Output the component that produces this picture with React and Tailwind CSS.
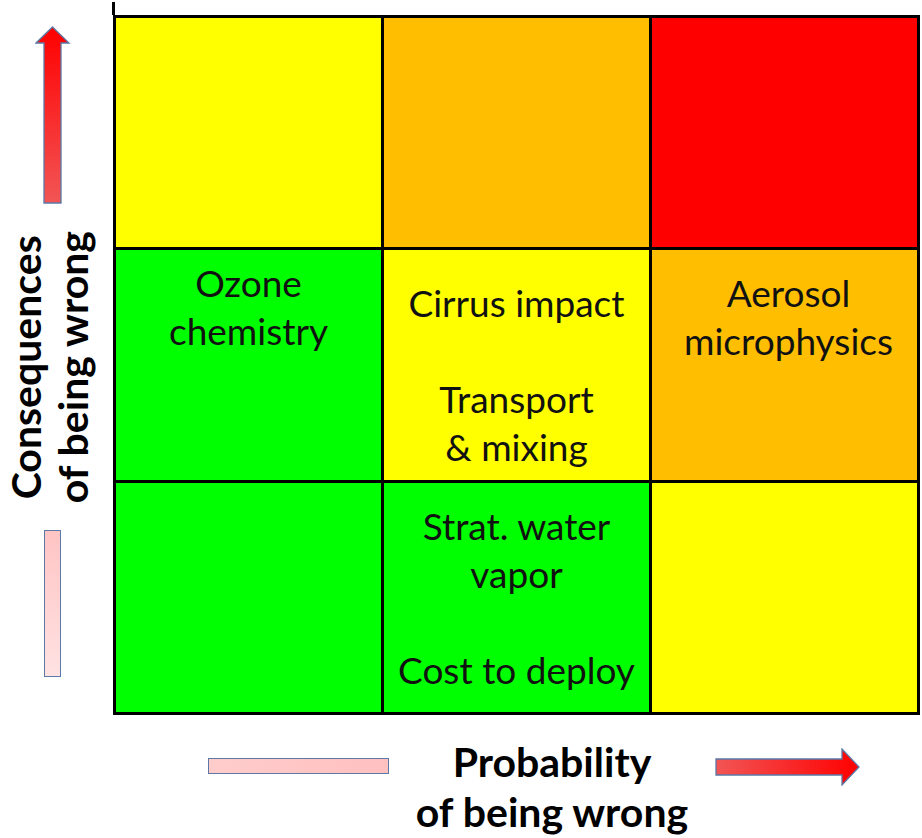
import React from 'react';

const FONT = { fontFamily: 'Lato, "Open Sans", sans-serif' };

// risk matrix: rows top→bottom, each cell has a fill and optional label lines
const ROWS = [
  [
    { bg: 'bg-[#ffff00]' },
    { bg: 'bg-[#ffbf00]' },
    { bg: 'bg-[#ff0000]' },
  ],
  [
    { bg: 'bg-[#00ff00]', pad: 'pt-[9px]', lines: ['Ozone', 'chemistry'] },
    { bg: 'bg-[#ffff00]', pad: 'pt-[29px]', lines: ['Cirrus impact', '', 'Transport', '& mixing'] },
    { bg: 'bg-[#ffbf00] pl-[8px]', pad: 'pt-[19px]', lines: ['Aerosol', 'microphysics'] },
  ],
  [
    { bg: 'bg-[#00ff00]' },
    { bg: 'bg-[#00ff00]', pad: 'pt-[19px]', lines: ['Strat. water', 'vapor', '', 'Cost to deploy'] },
    { bg: 'bg-[#ffff00]' },
  ],
];

function UpArrow() {
  return (
    <svg width="36" height="178" viewBox="0 0 36 178">
      <defs>
        <linearGradient id="upg" x1="0" y1="0" x2="0" y2="1">
          <stop offset="0" stopColor="#ff0000" />
          <stop offset="1" stopColor="#f25555" />
        </linearGradient>
      </defs>
      <polygon
        points="17.5,1 34,17 26,17 26,177 9,177 9,17 1,17"
        fill="url(#upg)"
        stroke="#5b78a6"
        strokeWidth="1.3"
      />
    </svg>
  );
}

function RightArrow() {
  return (
    <svg width="146" height="38" viewBox="0 0 146 38">
      <defs>
        <linearGradient id="rg" x1="0" y1="0" x2="1" y2="0">
          <stop offset="0" stopColor="#f25555" />
          <stop offset="1" stopColor="#ff0000" />
        </linearGradient>
      </defs>
      <polygon
        points="1,11 127,11 127,1 144,19 127,37 127,27 1,27"
        fill="url(#rg)"
        stroke="#5b78a6"
        strokeWidth="1.3"
      />
    </svg>
  );
}

function Cell({ bg, pad, lines }) {
  return (
    <div className={`${bg} ${pad || ''} flex flex-col items-center text-[37px] leading-[48px] text-[#111]`}>
      {(lines || []).map((l, i) => (
        <div key={i} className="h-[48px] whitespace-nowrap">{l}</div>
      ))}
    </div>
  );
}

export default function App() {
  return (
    <div className="w-[922px] h-[838px] bg-white overflow-hidden" style={FONT}>
      <div className="flex">
        {/* y axis */}
        <div className="w-[113px] h-[715px] flex flex-col items-center pt-[26px] pr-[8px]">
          <UpArrow />
          <div className="h-[326px] flex items-center justify-center -ml-[8px]">
            <div className="[writing-mode:vertical-rl] rotate-180 text-center font-bold text-[41px] leading-[47px] text-black whitespace-nowrap">
              Consequences<br />of being wrong
            </div>
          </div>
          <div className="w-[17px] h-[147px] border border-[#5b78a6] bg-gradient-to-b from-[#ffc4c4] to-[#ffe2e2]" />
        </div>

        {/* matrix */}
        <div className="relative mt-[15px]">
          <div className="absolute -top-[13px] -left-[1px] w-[3px] h-[13px] bg-black" />
          <div className="w-[807px] h-[700px] bg-black p-[3px] grid grid-cols-3 grid-rows-3 gap-[3px]">
            {ROWS.flat().map((c, i) => (
              <Cell key={i} {...c} />
            ))}
          </div>
        </div>
      </div>

      {/* x axis */}
      <div className="flex items-start pl-[208px]">
        <div className="mt-[43px] w-[181px] h-[16px] border border-[#5b78a6] bg-gradient-to-r from-[#ffcccc] to-[#ffc0c0]" />
        <div className="w-[326px] pt-[22px] text-center font-bold text-[41px] leading-[50px] text-black">
          Probability
          <br />
          of being wrong
        </div>
        <div className="mt-[33px]">
          <RightArrow />
        </div>
      </div>
    </div>
  );
}
